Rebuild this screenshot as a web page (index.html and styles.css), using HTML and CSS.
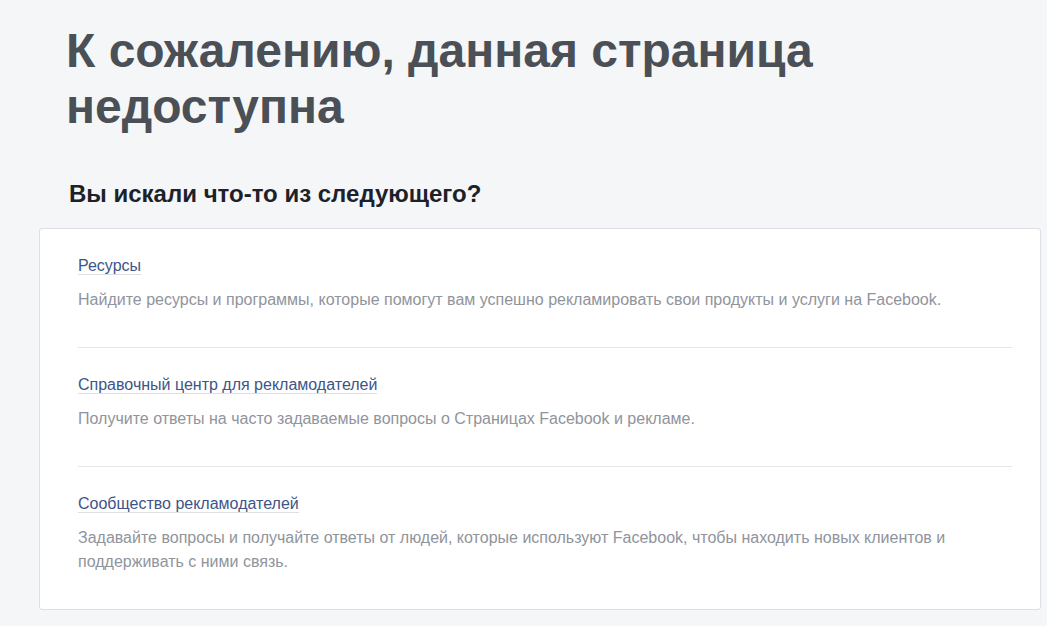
FILE: index.html
```html
<!DOCTYPE html>
<html lang="ru">
<head>
<meta charset="UTF-8" />
<meta name="viewport" content="width=device-width, initial-scale=1" />
<title>Страница недоступна</title>
<link rel="stylesheet" href="styles.css">
</head>
<body>

<div class="page">
  <h1 class="title">К сожалению, данная страница недоступна</h1>
  <h2 class="subtitle">Вы искали что-то из следующего?</h2>

  <div class="card">
    <div class="item">
      <div class="item-link"><a href="#">Ресурсы</a></div>
      <p class="item-desc">Найдите ресурсы и программы, которые помогут вам успешно рекламировать свои продукты и услуги на Facebook.</p>
    </div>
    <div class="item">
      <div class="item-link"><a href="#">Справочный центр для рекламодателей</a></div>
      <p class="item-desc">Получите ответы на часто задаваемые вопросы о Страницах Facebook и рекламе.</p>
    </div>
    <div class="item">
      <div class="item-link"><a href="#">Сообщество рекламодателей</a></div>
      <p class="item-desc">Задавайте вопросы и получайте ответы от людей, которые используют Facebook, чтобы находить новых клиентов и поддерживать с ними связь.</p>
    </div>
  </div>
</div>

</body>
</html>
```

FILE: styles.css
```css
body {
  margin: 0;
  font-family: Arial, "Liberation Sans", sans-serif;
  background-color: #f5f6f7;
}
.page {
  padding: 0 6px 0 39px;
}
.title {
  margin: 23px 0 0;
  padding-left: 27px;
  max-width: 790px;
  font-size: 48px;
  line-height: 56px;
  font-weight: bold;
  color: #4b4f56;
}
.subtitle {
  margin: 45px 0 0;
  padding-left: 30px;
  font-size: 24px;
  line-height: 28px;
  font-weight: bold;
  color: #1d2129;
}
.card {
  margin-top: 20px;
  padding: 0 28px 0 38px;
  background-color: #fff;
  border: 1px solid #dddfe2;
  border-radius: 3px;
}
.item {
  padding: 27px 0 35px;
  border-bottom: 1px solid #e5e6e9;
}
.item:last-child {
  border-bottom: none;
}
.item-link {
  font-size: 16px;
  line-height: 20px;
}
.item-link a {
  color: #3d5588;
  text-decoration: none;
  border-bottom: 1px solid #dddfe2;
}
.item-desc {
  margin: 12px 0 0;
  max-width: 880px;
  font-size: 16px;
  line-height: 24px;
  color: #90949c;
}
```
